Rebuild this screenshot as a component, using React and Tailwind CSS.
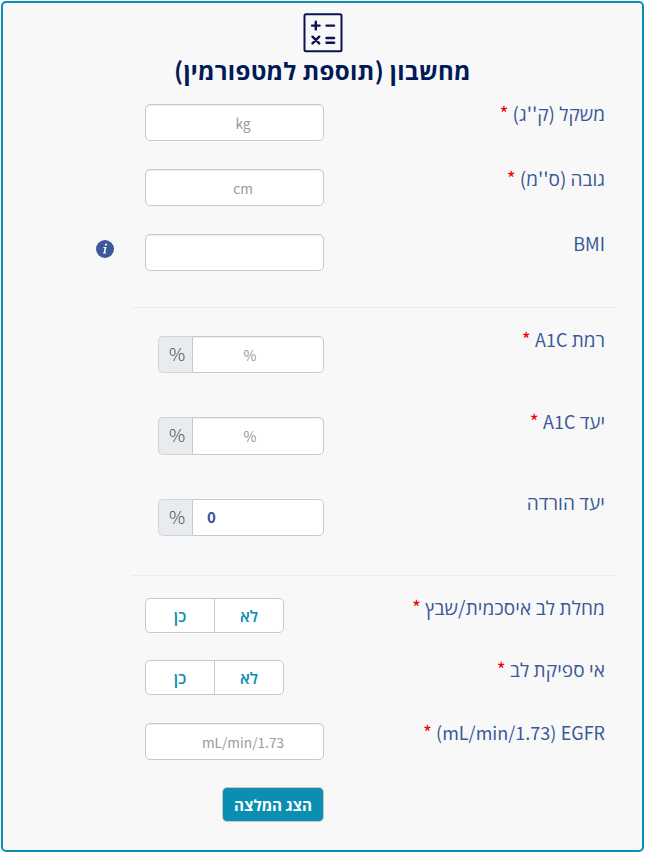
const FONT = "font-['Noto_Sans_CJK_SC','Open_Sans',sans-serif]";

const inputBase =
  "block h-full w-full border border-[#c8c9cb] bg-white leading-5 outline-none placeholder:text-[#999999] placeholder:opacity-100";

function Row({ className, label, required, labelClass = "-mt-[3px]", textClass = "", children }) {
  return (
    <div className={`flex items-start ${className}`}>
      <label className={`block w-[281px] shrink-0 text-[19px] leading-6 whitespace-nowrap text-[#3b5998] ${labelClass}`}>
        <span className={textClass}>{label}</span>
        {required && <span className="text-[#f00000]"> *</span>}
      </label>
      {children}
    </div>
  );
}

function Latin({ children }) {
  return <bdi className="text-[18px]">{children}</bdi>;
}

function TextField({ placeholder }) {
  return (
    <div className="h-[37px] w-[179px] shrink-0">
      <input
        dir="ltr"
        placeholder={placeholder}
        className={`${inputBase} rounded-[5px] pl-[17px] text-center text-[13.7px] shadow-[inset_0_1px_1px_rgba(0,0,0,0.075)]`}
      />
    </div>
  );
}

function PercentField({ value, tall }) {
  return (
    <div dir="ltr" className={`flex w-[166px] shrink-0 ${tall ? "h-[38px]" : "h-[37px]"}`}>
      <span className="flex w-[34px] shrink-0 items-center justify-center rounded-l-[5px] border border-r-0 border-[#ced4da] bg-[#e9ecef] pb-[4px] pl-[3px] text-[18px] leading-6 font-light text-[#495057]">
        %
      </span>
      {value ? (
        <input defaultValue={value} className={`${inputBase} rounded-r-[5px] pb-[2px] pl-[14px] text-[15px] font-bold text-[#3b4f98]`} />
      ) : (
        <input
          placeholder="%"
          className={`${inputBase} rounded-r-[5px] pr-[16px] text-center text-[14px] shadow-[inset_0_1px_1px_rgba(0,0,0,0.075)]`}
        />
      )}
    </div>
  );
}

function YesNo() {
  return (
    <div className="mr-10 flex h-[35px] w-[139px] shrink-0 overflow-hidden rounded-[5px] border border-[#c8c9cb] bg-white text-[16px] font-semibold text-[#0a8fb2]">
      <button className="w-[69px] border-l border-[#c8c9cb] pb-[2px]">לא</button>
      <button className="flex-1 pb-[2px]">כן</button>
    </div>
  );
}

export default function App() {
  return (
    <div className="h-[852px] w-[645px] bg-white pt-px pl-px">
      <main dir="rtl" className={`flex h-[851px] w-[643px] flex-col rounded-[5px] border-2 border-[#0a8fb2] bg-[#f8f8f8] ${FONT}`}>
        <header className="flex h-[101px] shrink-0 flex-col items-center pt-[10px]">
          <svg width="40" height="40" viewBox="0 0 40 40" fill="none" stroke="#0b1354">
            <rect x="1.5" y="1.2" width="37" height="37" rx="1.5" strokeWidth="2" />
            <path d="M9 12.6h7.6M12.8 8.8v7.6M23.5 12.6h7.6M9.5 23.7l6.7 6.7M16.2 23.7l-6.7 6.7M23.5 25h7.6M23.5 29.8h7.6" strokeWidth="2.4" strokeLinecap="round" />
          </svg>
          <h1 className="mt-[3px] text-[24px] leading-7 font-bold tracking-[0.3px] whitespace-nowrap text-[#001a57]">
            מחשבון (תוספת למטפורמין)
          </h1>
        </header>

        <section className="h-[203px] shrink-0 pr-[37px]">
          <Row className="h-[65px]" label="משקל (ק''ג)" required>
            <TextField placeholder="kg" />
          </Row>
          <Row className="h-[65px]" label="גובה (ס''מ)" required>
            <TextField placeholder="cm" />
          </Row>
          <Row className="h-[73px]" label={<Latin>BMI</Latin>}>
            <TextField />
            <svg className="mt-[6px] mr-[31px] shrink-0" width="18" height="18" viewBox="0 0 18 18">
              <circle cx="9" cy="9" r="9" fill="#3b5998" />
              <path d="M9.2 3.7h2l-.4 1.9h-2zM7.5 7h2.9l-1.2 5.4h1l-.2 1H6.9l.2-1h.6l.9-4.3H7.3z" fill="white" />
            </svg>
          </Row>
        </section>

        <section className="mr-[27px] ml-[128px] h-px shrink-0 bg-[#ececec]" />
        <section className="h-[267px] shrink-0 pt-[28px] pr-[37px]">
          <Row className="h-[81px]" labelClass="-mt-[9px]" label={<>רמת <Latin>A1C</Latin></>} required>
            <PercentField />
          </Row>
          <Row className="h-[82px]" labelClass="-mt-[8px]" label={<>יעד <Latin>A1C</Latin></>} required>
            <PercentField tall />
          </Row>
          <Row className="h-[76px]" labelClass="-mt-[9px]" textClass="tracking-[0.1px]" label="יעד הורדה">
            <PercentField value="0" />
          </Row>
        </section>

        <section className="mr-[27px] ml-[128px] h-px shrink-0 bg-[#ececec]" />
        <section className="shrink-0 pt-[22px] pr-[37px]">
          <Row className="h-[62px]" textClass="tracking-[0.13px]" label="מחלת לב איסכמית/שבץ" required>
            <YesNo />
          </Row>
          <Row className="h-[63px]" textClass="tracking-[0.1px]" label="אי ספיקת לב" required>
            <YesNo />
          </Row>
          <Row className="h-[64px]" label={<><Latin>EGFR</Latin> <Latin>(mL/min/1.73)</Latin></>} required>
            <TextField placeholder="mL/min/1.73" />
          </Row>
          <button className="mr-[281px] h-[35px] w-[102px] rounded-[5px] border border-[#c8c9cb] bg-[#0a8fb2] pb-px text-[15.2px] font-bold whitespace-nowrap text-white">
            הצג המלצה
          </button>
        </section>
      </main>
    </div>
  );
}
